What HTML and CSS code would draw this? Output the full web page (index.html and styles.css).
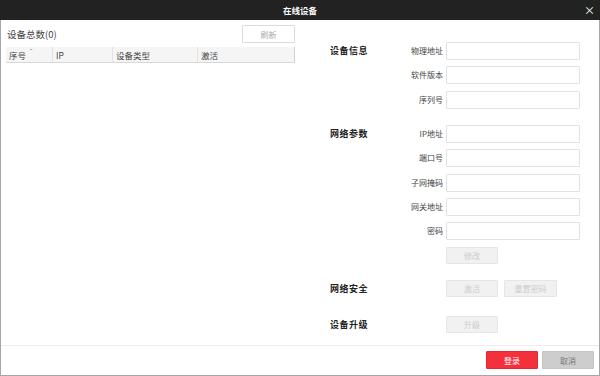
FILE: index.html
```html
<!DOCTYPE html>
<html lang="zh-CN">
<head>
<meta charset="UTF-8">
<meta name="viewport" content="width=device-width, initial-scale=1.0">
<title>在线设备</title>
<link rel="stylesheet" href="styles.css">
</head>
<body>
<div class="window">
  <div class="titlebar">
    <span class="title">在线设备</span>
    <span class="close">×</span>
  </div>

  <div class="main">
    <div class="list-panel">
      <div class="list-top">
        <span class="count">设备总数(0)</span>
        <button class="btn btn-refresh">刷新</button>
      </div>
      <div class="table-head">
        <div class="col col-no">序号<span class="caret">ˆ</span></div>
        <div class="col col-ip">IP</div>
        <div class="col col-type">设备类型</div>
        <div class="col col-active">激活</div>
      </div>
    </div>

    <div class="info-panel">
      <div class="section">
        <div class="section-title">设备信息</div>
        <div class="fields">
          <label>物理地址</label><input type="text">
          <label>软件版本</label><input type="text">
          <label>序列号</label><input type="text">
        </div>
      </div>

      <div class="section">
        <div class="section-title">网络参数</div>
        <div class="fields">
          <label>IP地址</label><input type="text">
          <label>端口号</label><input type="text">
          <label>子网掩码</label><input type="text">
          <label>网关地址</label><input type="text">
          <label>密码</label><input type="password">
          <span></span>
          <div class="actions"><button class="btn btn-off">修改</button></div>
        </div>
      </div>

      <div class="section section-btns">
        <div class="section-title">网络安全</div>
        <div class="fields">
          <span></span>
          <div class="actions">
            <button class="btn btn-off">激活</button>
            <button class="btn btn-off">重置密码</button>
          </div>
        </div>
      </div>

      <div class="section section-btns">
        <div class="section-title">设备升级</div>
        <div class="fields">
          <span></span>
          <div class="actions"><button class="btn btn-off">升级</button></div>
        </div>
      </div>
    </div>
  </div>

  <div class="footer">
    <button class="btn btn-primary">登录</button>
    <button class="btn btn-cancel">取消</button>
  </div>
</div>
</body>
</html>
```

FILE: styles.css
```css
* {
  box-sizing: border-box;
}
body {
  margin: 0;
  font-family: "Noto Sans CJK SC", "Liberation Sans", sans-serif;
  font-size: 8px;
  color: #333;
  background: #fff;
}
.window {
  width: 600px;
  height: 376px;
  border: 1px solid #a6a6a6;
  border-top: none;
  display: flex;
  flex-direction: column;
}
.titlebar {
  height: 20px;
  margin: 0 -1px;
  background: #222;
  color: #fff;
  display: flex;
  align-items: center;
  justify-content: center;
  position: relative;
}
.title {
  font-weight: bold;
  font-size: 8.5px;
}
.close {
  position: absolute;
  right: 5px;
  top: 3px;
  font-size: 11px;
  line-height: 14px;
}
.main {
  height: 325px;
  display: flex;
}
.list-panel {
  width: 289px;
  margin-left: 5px;
  padding-top: 5px;
}
.list-top {
  height: 18px;
  display: flex;
  align-items: center;
  justify-content: space-between;
}
.count {
  font-size: 9.5px;
  padding-left: 1px;
  color: #444;
}
.btn {
  font-family: inherit;
  font-size: 8px;
  height: 17px;
  width: 52px;
  padding: 0;
  border: 1px solid transparent;
  border-radius: 1px;
  cursor: pointer;
}
.btn-refresh {
  height: 18px;
  width: 53px;
  background: #fff;
  border-color: #dcdcdc;
  color: #a8a8a8;
}
.table-head {
  margin-top: 4px;
  height: 16px;
  display: flex;
  background: #f5f5f5;
  border-bottom: 1px solid #d8d8d8;
  border-right: 1px solid #cfcfcf;
}
.col {
  display: flex;
  align-items: center;
  padding-left: 3px;
  border-right: 1px solid #e2e2e2;
  color: #444;
  font-size: 8.5px;
}
.col-no { width: 47px; }
.col-ip { width: 60px; }
.col-type { width: 85px; }
.col-active { flex: 1; border-right: none; }
.caret {
  font-size: 7px;
  align-self: flex-start;
  margin-left: 4px;
  line-height: 8px;
  color: #777;
}
.info-panel {
  margin-left: 35px;
  padding-top: 22px;
}
.section {
  display: flex;
  margin-bottom: 16px;
}
.section-btns {
  margin-bottom: 18px;
}
.section-title {
  width: 60px;
  line-height: 18px;
  font-size: 9px;
  font-weight: bold;
  color: #222;
  letter-spacing: 0.5px;
}
.fields {
  display: grid;
  grid-template-columns: 53px 134px;
  column-gap: 3px;
  row-gap: 6.4px;
}
.fields label {
  text-align: right;
  line-height: 18px;
  color: #444;
}
.fields input {
  height: 18px;
  width: 134px;
  border: 1px solid #e2e2e2;
  border-radius: 1px;
  padding: 0 3px;
  font-size: 8px;
  outline: none;
}
.actions {
  display: flex;
  gap: 6px;
}
.btn-off {
  background: #f1f1f1;
  border-color: #e6e6e6;
  color: #cdcdcd;
  cursor: default;
}
.btn-off + .btn-off {
  width: 53px;
}
.footer {
  flex: 1;
  border-top: 1px solid #ececec;
  display: flex;
  justify-content: flex-end;
  align-items: flex-start;
  gap: 4px;
  padding: 5px 5px 0 0;
}
.btn-primary {
  height: 18px;
  background: #f4303b;
  border-color: #e22a34;
  color: #fff;
}
.btn-cancel {
  height: 18px;
  background: #cdcdcd;
  border-color: #c4c4c4;
  color: #777;
}
```
